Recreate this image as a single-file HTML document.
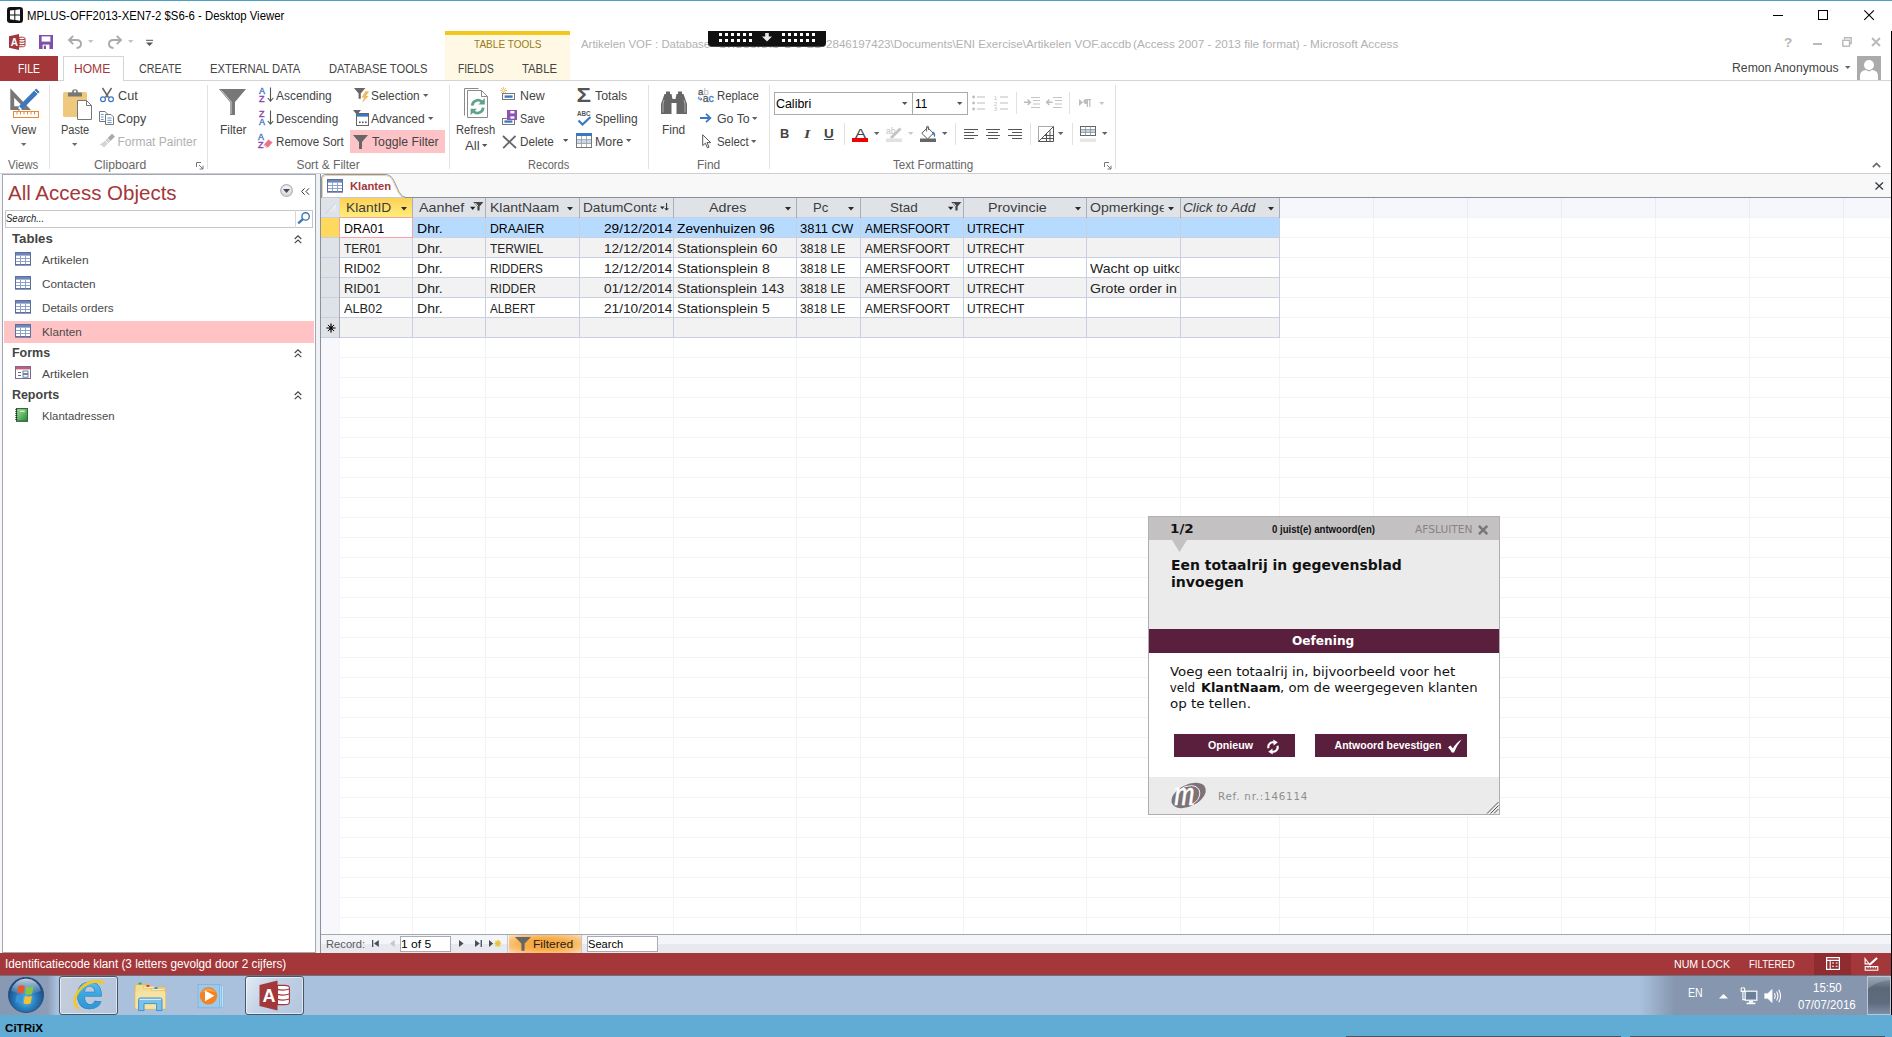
<!DOCTYPE html>
<html lang="nl"><head><meta charset="utf-8"><title>Microsoft Access - Klanten</title>
<style>
html,body{margin:0;padding:0;background:#fff;}
body{width:1892px;height:1037px;overflow:hidden;}
#screen{position:relative;width:1892px;height:1037px;overflow:hidden;background:#fff;font-family:"Liberation Sans",sans-serif;}
.a{position:absolute;box-sizing:border-box;}
.t{position:absolute;white-space:pre;transform-origin:0 50%;display:block;}
svg.a{overflow:visible;}

</style></head>
<body>
<div id="screen">
<div class="a " style="left:0px;top:0px;width:1892px;height:1px;background:#4aa0c8;"></div>
<div class="a " style="left:0px;top:1px;width:1892px;height:30px;background:#ffffff;"></div>
<span class="t" style="left:27.4px;top:8.01px;font-size:12.5px;line-height:16px;color:#000;transform:scaleX(0.9083);">MPLUS-OFF2013-XEN7-2 $S6-6 - Desktop Viewer</span>
<div class="a " style="left:1773px;top:15px;width:10px;height:1px;background:#000;"></div>
<div class="a " style="left:1818px;top:10px;width:10px;height:10px;border:1px solid #000;"></div>
<svg class="a" style="left:1864px;top:10px;" width="10" height="10" viewBox="0 0 10 10"><path d="M0.3 0.3 L9.9 9.9 M9.9 0.3 L0.3 9.9" stroke="#000" stroke-width="1.1" fill="none"/></svg>
<div class="a " style="left:445px;top:31px;width:125px;height:4px;background:#f2c81d;"></div>
<div class="a " style="left:445px;top:35px;width:125px;height:45.5px;background:#fef8e4;"></div>
<span class="t" style="left:473.7px;top:38.00px;font-size:10.6px;line-height:13px;color:#9c7a16;transform:scaleX(0.9482);">TABLE TOOLS</span>
<span class="t" style="left:580.5px;top:37.00px;font-size:11.5px;line-height:14px;color:#b2b2b2;transform:scaleX(0.9904);">Artikelen VOF : Database</span>
<span class="t" style="left:710.4px;top:37.00px;font-size:11.5px;line-height:14px;color:#b2b2b2;transform:scaleX(1.1122);">- C:\Users\S-1-5-21-</span>
<span class="t" style="left:825.6px;top:37.00px;font-size:11.5px;line-height:14px;color:#b2b2b2;transform:scaleX(1.0094);">2846197423\Documents\ENI Exercise\Artikelen VOF.accdb </span>
<span class="t" style="left:1132.9px;top:37.00px;font-size:11.5px;line-height:14px;color:#b2b2b2;transform:scaleX(1.0226);">(Access 2007 - 2013 file format) - Microsoft Access</span>
<div class="a " style="left:0px;top:80px;width:1890.5px;height:1px;background:#d4d4d4;"></div>
<div class="a " style="left:0px;top:56px;width:58px;height:25px;background:#a4373a;"></div>
<span class="t" style="left:17.7px;top:62.01px;font-size:12px;line-height:15px;color:#fff;transform:scaleX(0.8602);">FILE</span>
<div class="a " style="left:62.5px;top:56px;width:61px;height:25px;background:#fff;border:1px solid #d4d4d4;border-bottom:none;"></div>
<span class="t" style="left:74.4px;top:62.01px;font-size:12px;line-height:15px;color:#a4373a;transform:scaleX(1.0056);">HOME</span>
<span class="t" style="left:138.9px;top:62.01px;font-size:12px;line-height:15px;color:#444;transform:scaleX(0.8913);">CREATE</span>
<span class="t" style="left:209.9px;top:62.01px;font-size:12px;line-height:15px;color:#444;transform:scaleX(0.9361);">EXTERNAL DATA</span>
<span class="t" style="left:329.1px;top:62.01px;font-size:12px;line-height:15px;color:#444;transform:scaleX(0.9308);">DATABASE TOOLS</span>
<span class="t" style="left:457.8px;top:62.01px;font-size:12px;line-height:15px;color:#444;transform:scaleX(0.8497);">FIELDS</span>
<span class="t" style="left:521.6px;top:62.01px;font-size:12px;line-height:15px;color:#444;transform:scaleX(0.9428);">TABLE</span>
<span class="t" style="left:1731.9px;top:61.01px;font-size:12px;line-height:15px;color:#444;transform:scaleX(1.0188);">Remon Anonymous</span>
<div class="a " style="left:0px;top:173px;width:1890.5px;height:1px;background:#cfcfcf;"></div>
<div class="a " style="left:49px;top:85px;width:1px;height:84px;background:#e1e1e1;"></div>
<div class="a " style="left:207px;top:85px;width:1px;height:84px;background:#e1e1e1;"></div>
<div class="a " style="left:449px;top:85px;width:1px;height:84px;background:#e1e1e1;"></div>
<div class="a " style="left:648px;top:85px;width:1px;height:84px;background:#e1e1e1;"></div>
<div class="a " style="left:769px;top:85px;width:1px;height:84px;background:#e1e1e1;"></div>
<div class="a " style="left:1115px;top:85px;width:1px;height:84px;background:#e1e1e1;"></div>
<div class="a " style="left:844px;top:123px;width:1px;height:22px;background:#e1e1e1;"></div>
<div class="a " style="left:955px;top:123px;width:1px;height:22px;background:#e1e1e1;"></div>
<div class="a " style="left:1030px;top:123px;width:1px;height:22px;background:#e1e1e1;"></div>
<div class="a " style="left:1072px;top:123px;width:1px;height:22px;background:#e1e1e1;"></div>
<div class="a " style="left:1016px;top:92px;width:1px;height:22px;background:#e1e1e1;"></div>
<div class="a " style="left:1069px;top:92px;width:1px;height:22px;background:#e1e1e1;"></div>
<span class="t" style="left:8.4px;top:158.01px;font-size:12px;line-height:15px;color:#666;transform:scaleX(0.9498);">Views</span>
<span class="t" style="left:94.4px;top:158.01px;font-size:12px;line-height:15px;color:#666;transform:scaleX(1.0161);">Clipboard</span>
<span class="t" style="left:296.4px;top:158.01px;font-size:12px;line-height:15px;color:#666;">Sort &amp; Filter</span>
<span class="t" style="left:527.9px;top:158.01px;font-size:12px;line-height:15px;color:#666;transform:scaleX(0.9220);">Records</span>
<span class="t" style="left:696.9px;top:158.01px;font-size:12px;line-height:15px;color:#666;transform:scaleX(0.9938);">Find</span>
<span class="t" style="left:893.4px;top:158.01px;font-size:12px;line-height:15px;color:#666;transform:scaleX(0.9697);">Text Formatting</span>
<span class="t" style="left:11.0px;top:123.01px;font-size:12px;line-height:15px;color:#444;transform:scaleX(0.9769);">View</span>
<span class="t" style="left:61.4px;top:123.01px;font-size:12px;line-height:15px;color:#444;transform:scaleX(0.9189);">Paste</span>
<span class="t" style="left:118.2px;top:89.02px;font-size:12px;line-height:15px;color:#444;transform:scaleX(1.0542);">Cut</span>
<span class="t" style="left:117.4px;top:112.02px;font-size:12px;line-height:15px;color:#444;transform:scaleX(1.0423);">Copy</span>
<span class="t" style="left:117.4px;top:135.01px;font-size:12px;line-height:15px;color:#b1b1b1;">Format Painter</span>
<span class="t" style="left:219.9px;top:123.01px;font-size:12px;line-height:15px;color:#444;">Filter</span>
<span class="t" style="left:276.4px;top:89.02px;font-size:12px;line-height:15px;color:#444;transform:scaleX(0.9938);">Ascending</span>
<span class="t" style="left:275.9px;top:112.02px;font-size:12px;line-height:15px;color:#444;transform:scaleX(0.9815);">Descending</span>
<span class="t" style="left:275.9px;top:135.01px;font-size:12px;line-height:15px;color:#444;transform:scaleX(0.9667);">Remove Sort</span>
<span class="t" style="left:371.4px;top:89.02px;font-size:12px;line-height:15px;color:#444;transform:scaleX(0.9863);">Selection</span>
<span class="t" style="left:371.4px;top:112.02px;font-size:12px;line-height:15px;color:#444;transform:scaleX(1.0061);">Advanced</span>
<div class="a " style="left:350px;top:130px;width:95px;height:23px;background:#fdc3c6;"></div>
<span class="t" style="left:371.9px;top:135.01px;font-size:12px;line-height:15px;color:#444;transform:scaleX(1.0203);">Toggle Filter</span>
<span class="t" style="left:455.9px;top:123.01px;font-size:12px;line-height:15px;color:#444;transform:scaleX(0.9326);">Refresh</span>
<span class="t" style="left:464.9px;top:139.01px;font-size:12px;line-height:15px;color:#444;transform:scaleX(1.1016);">All</span>
<span class="t" style="left:519.9px;top:89.02px;font-size:12px;line-height:15px;color:#444;transform:scaleX(1.0285);">New</span>
<span class="t" style="left:519.9px;top:112.02px;font-size:12px;line-height:15px;color:#444;transform:scaleX(0.9028);">Save</span>
<span class="t" style="left:519.9px;top:135.01px;font-size:12px;line-height:15px;color:#444;transform:scaleX(0.9715);">Delete</span>
<span class="t" style="left:595.4px;top:89.02px;font-size:12px;line-height:15px;color:#444;transform:scaleX(1.0268);">Totals</span>
<span class="t" style="left:594.9px;top:112.02px;font-size:12px;line-height:15px;color:#444;">Spelling</span>
<span class="t" style="left:595.4px;top:135.01px;font-size:12px;line-height:15px;color:#444;transform:scaleX(1.0313);">More</span>
<span class="t" style="left:661.9px;top:123.01px;font-size:12px;line-height:15px;color:#444;transform:scaleX(0.9938);">Find</span>
<span class="t" style="left:716.9px;top:89.02px;font-size:12px;line-height:15px;color:#444;transform:scaleX(0.9471);">Replace</span>
<span class="t" style="left:716.9px;top:112.02px;font-size:12px;line-height:15px;color:#444;transform:scaleX(1.0279);">Go To</span>
<span class="t" style="left:716.9px;top:135.01px;font-size:12px;line-height:15px;color:#444;transform:scaleX(0.9503);">Select</span>
<div class="a " style="left:774px;top:92px;width:139px;height:23px;background:#fff;border:1px solid #ababab;"></div>
<div class="a " style="left:912px;top:92px;width:56px;height:23px;background:#fff;border:1px solid #ababab;"></div>
<span class="t" style="left:776.4px;top:97.01px;font-size:12px;line-height:15px;color:#000;transform:scaleX(1.0348);">Calibri</span>
<span class="t" style="left:915.4px;top:97.01px;font-size:12px;line-height:15px;color:#000;transform:scaleX(0.9784);">11</span>
<div class="a " style="left:0px;top:174px;width:2px;height:779px;background:#f6f6f6;"></div>
<div class="a " style="left:2px;top:174px;width:1px;height:779px;background:#a0a8b4;"></div>
<div class="a " style="left:2px;top:174px;width:314px;height:1px;background:#a0a8b4;"></div>
<div class="a " style="left:315px;top:174px;width:1px;height:779px;background:#a0a8b4;"></div>
<div class="a " style="left:2px;top:952px;width:319px;height:1px;background:#a0a8b4;"></div>
<div class="a " style="left:316px;top:174px;width:4px;height:779px;background:#f0f1f4;"></div>
<div class="a " style="left:320px;top:174px;width:1px;height:779px;background:#8a919e;"></div>
<span class="t" style="left:8.2px;top:180.02px;font-size:21px;line-height:26px;color:#a4373a;transform:scaleX(0.9761);">All Access Objects</span>
<div class="a " style="left:5px;top:209.5px;width:308px;height:18.5px;background:#fff;border:1px solid #c6c6c6;"></div>
<div class="a " style="left:294.5px;top:210px;width:1px;height:17.5px;background:#d8d8d8;"></div>
<span class="t" style="left:6.4px;top:211.00px;font-size:11.5px;line-height:14px;color:#222;font-style:italic;transform:scaleX(0.8288);">Search...</span>
<span class="t" style="left:11.9px;top:231.01px;font-size:12.5px;line-height:16px;color:#444;font-weight:bold;transform:scaleX(1.0537);">Tables</span>
<svg class="a" style="left:294.3px;top:234.5px;" width="8" height="9" viewBox="0 0 8 9"><path d="M0.7 4 L4 0.9 L7.3 4 M0.7 8.2 L4 5.1 L7.3 8.2" stroke="#444" stroke-width="1.15" fill="none"/></svg>
<span class="t" style="left:42.4px;top:253.00px;font-size:11.5px;line-height:14px;color:#4a4a4a;transform:scaleX(1.0425);">Artikelen</span>
<svg class="a" style="left:15px;top:252.0px" width="16" height="14" viewBox="0 0 16 14"><rect x="0.5" y="0.5" width="15" height="12" fill="#fff" stroke="#5a6f9c"/>
<rect x="1" y="1" width="14" height="2.6" fill="#6f86b8"/>
<path d="M1 6.5H15M1 9.5H15M5.5 3.5V12.5M10.5 3.5V12.5" stroke="#8da2cc" stroke-width="1" fill="none"/>
<rect x="0" y="13" width="16" height="1" fill="#3b4b6e" opacity=".55"/></svg>
<span class="t" style="left:42.4px;top:277.00px;font-size:11.5px;line-height:14px;color:#4a4a4a;transform:scaleX(1.0231);">Contacten</span>
<svg class="a" style="left:15px;top:276.0px" width="16" height="14" viewBox="0 0 16 14"><rect x="0.5" y="0.5" width="15" height="12" fill="#fff" stroke="#5a6f9c"/>
<rect x="1" y="1" width="14" height="2.6" fill="#6f86b8"/>
<path d="M1 6.5H15M1 9.5H15M5.5 3.5V12.5M10.5 3.5V12.5" stroke="#8da2cc" stroke-width="1" fill="none"/>
<rect x="0" y="13" width="16" height="1" fill="#3b4b6e" opacity=".55"/></svg>
<span class="t" style="left:42.4px;top:301.00px;font-size:11.5px;line-height:14px;color:#4a4a4a;transform:scaleX(1.0098);">Details orders</span>
<svg class="a" style="left:15px;top:300.0px" width="16" height="14" viewBox="0 0 16 14"><rect x="0.5" y="0.5" width="15" height="12" fill="#fff" stroke="#5a6f9c"/>
<rect x="1" y="1" width="14" height="2.6" fill="#6f86b8"/>
<path d="M1 6.5H15M1 9.5H15M5.5 3.5V12.5M10.5 3.5V12.5" stroke="#8da2cc" stroke-width="1" fill="none"/>
<rect x="0" y="13" width="16" height="1" fill="#3b4b6e" opacity=".55"/></svg>
<div class="a " style="left:4px;top:321.0px;width:310px;height:21.5px;background:#ffc3c5;"></div>
<span class="t" style="left:42.4px;top:325.00px;font-size:11.5px;line-height:14px;color:#4a4a4a;transform:scaleX(1.0163);">Klanten</span>
<svg class="a" style="left:15px;top:324.0px" width="16" height="14" viewBox="0 0 16 14"><rect x="0.5" y="0.5" width="15" height="12" fill="#fff" stroke="#5a6f9c"/>
<rect x="1" y="1" width="14" height="2.6" fill="#6f86b8"/>
<path d="M1 6.5H15M1 9.5H15M5.5 3.5V12.5M10.5 3.5V12.5" stroke="#8da2cc" stroke-width="1" fill="none"/>
<rect x="0" y="13" width="16" height="1" fill="#3b4b6e" opacity=".55"/></svg>
<span class="t" style="left:11.9px;top:345.01px;font-size:12.5px;line-height:16px;color:#444;font-weight:bold;">Forms</span>
<svg class="a" style="left:294.3px;top:348.5px;" width="8" height="9" viewBox="0 0 8 9"><path d="M0.7 4 L4 0.9 L7.3 4 M0.7 8.2 L4 5.1 L7.3 8.2" stroke="#444" stroke-width="1.15" fill="none"/></svg>
<span class="t" style="left:42.4px;top:367.00px;font-size:11.5px;line-height:14px;color:#4a4a4a;transform:scaleX(1.0425);">Artikelen</span>
<svg class="a" style="left:15px;top:366.0px" width="16" height="14" viewBox="0 0 16 14"><rect x="0.5" y="0.5" width="15" height="12" fill="#fff" stroke="#7b6a8c"/>
<rect x="1" y="1" width="14" height="2.4" fill="#c85a7c"/>
<path d="M3 6.5H6M3 9.5H6" stroke="#5a6f9c" stroke-width="1.2"/><rect x="8" y="5" width="5" height="2.6" fill="none" stroke="#5a6f9c" stroke-width=".9"/><rect x="8" y="8.6" width="5" height="2.6" fill="none" stroke="#5a6f9c" stroke-width=".9"/></svg>
<span class="t" style="left:11.9px;top:387.01px;font-size:12.5px;line-height:16px;color:#444;font-weight:bold;">Reports</span>
<svg class="a" style="left:294.3px;top:390.5px;" width="8" height="9" viewBox="0 0 8 9"><path d="M0.7 4 L4 0.9 L7.3 4 M0.7 8.2 L4 5.1 L7.3 8.2" stroke="#444" stroke-width="1.15" fill="none"/></svg>
<span class="t" style="left:42.4px;top:409.00px;font-size:11.5px;line-height:14px;color:#4a4a4a;transform:scaleX(0.9880);">Klantadressen</span>
<svg class="a" style="left:15px;top:408.0px" width="14" height="14" viewBox="0 0 14 14"><defs><linearGradient id="rpg" x1="0" y1="0" x2="1" y2="1"><stop offset="0" stop-color="#a6dca0"/><stop offset=".55" stop-color="#5db562"/><stop offset="1" stop-color="#2f7f3b"/></linearGradient></defs>
<rect x="1.5" y="0.5" width="11" height="12.5" fill="url(#rpg)" stroke="#2c6b37"/>
<rect x="4.4" y="2.2" width="5.6" height="2" fill="#d6f0d2" stroke="#6fae72" stroke-width=".5"/>
<path d="M0.3 1.5H2.3M0.3 3.5H2.3M0.3 5.5H2.3M0.3 7.5H2.3M0.3 9.5H2.3M0.3 11.5H2.3" stroke="#222" stroke-width=".9"/>
<rect x="1" y="13" width="12" height="1" fill="#1d3f22" opacity=".6"/></svg>
<div class="a " style="left:321px;top:174px;width:1569.5px;height:23px;background:#f8f8f8;"></div>
<div class="a " style="left:321px;top:197px;width:1569.5px;height:1px;background:#8b9097;"></div>
<div class="a " style="left:321px;top:198px;width:1569.5px;height:20px;background:#f6f7fd;"></div>
<div class="a " style="left:321px;top:217px;width:1569.5px;height:1px;background:#f3f4f8;"></div>
<div class="a " style="left:321px;top:237px;width:1569.5px;height:1px;background:#f3f4f8;"></div>
<div class="a " style="left:321px;top:257px;width:1569.5px;height:1px;background:#f3f4f8;"></div>
<div class="a " style="left:321px;top:277px;width:1569.5px;height:1px;background:#f3f4f8;"></div>
<div class="a " style="left:321px;top:297px;width:1569.5px;height:1px;background:#f3f4f8;"></div>
<div class="a " style="left:321px;top:317px;width:1569.5px;height:1px;background:#f3f4f8;"></div>
<div class="a " style="left:321px;top:337px;width:1569.5px;height:1px;background:#f3f4f8;"></div>
<div class="a " style="left:321px;top:357px;width:1569.5px;height:1px;background:#f3f4f8;"></div>
<div class="a " style="left:321px;top:377px;width:1569.5px;height:1px;background:#f3f4f8;"></div>
<div class="a " style="left:321px;top:397px;width:1569.5px;height:1px;background:#f3f4f8;"></div>
<div class="a " style="left:321px;top:417px;width:1569.5px;height:1px;background:#f3f4f8;"></div>
<div class="a " style="left:321px;top:437px;width:1569.5px;height:1px;background:#f3f4f8;"></div>
<div class="a " style="left:321px;top:457px;width:1569.5px;height:1px;background:#f3f4f8;"></div>
<div class="a " style="left:321px;top:477px;width:1569.5px;height:1px;background:#f3f4f8;"></div>
<div class="a " style="left:321px;top:497px;width:1569.5px;height:1px;background:#f3f4f8;"></div>
<div class="a " style="left:321px;top:517px;width:1569.5px;height:1px;background:#f3f4f8;"></div>
<div class="a " style="left:321px;top:537px;width:1569.5px;height:1px;background:#f3f4f8;"></div>
<div class="a " style="left:321px;top:557px;width:1569.5px;height:1px;background:#f3f4f8;"></div>
<div class="a " style="left:321px;top:577px;width:1569.5px;height:1px;background:#f3f4f8;"></div>
<div class="a " style="left:321px;top:597px;width:1569.5px;height:1px;background:#f3f4f8;"></div>
<div class="a " style="left:321px;top:617px;width:1569.5px;height:1px;background:#f3f4f8;"></div>
<div class="a " style="left:321px;top:637px;width:1569.5px;height:1px;background:#f3f4f8;"></div>
<div class="a " style="left:321px;top:657px;width:1569.5px;height:1px;background:#f3f4f8;"></div>
<div class="a " style="left:321px;top:677px;width:1569.5px;height:1px;background:#f3f4f8;"></div>
<div class="a " style="left:321px;top:697px;width:1569.5px;height:1px;background:#f3f4f8;"></div>
<div class="a " style="left:321px;top:717px;width:1569.5px;height:1px;background:#f3f4f8;"></div>
<div class="a " style="left:321px;top:737px;width:1569.5px;height:1px;background:#f3f4f8;"></div>
<div class="a " style="left:321px;top:757px;width:1569.5px;height:1px;background:#f3f4f8;"></div>
<div class="a " style="left:321px;top:777px;width:1569.5px;height:1px;background:#f3f4f8;"></div>
<div class="a " style="left:321px;top:797px;width:1569.5px;height:1px;background:#f3f4f8;"></div>
<div class="a " style="left:321px;top:817px;width:1569.5px;height:1px;background:#f3f4f8;"></div>
<div class="a " style="left:321px;top:837px;width:1569.5px;height:1px;background:#f3f4f8;"></div>
<div class="a " style="left:321px;top:857px;width:1569.5px;height:1px;background:#f3f4f8;"></div>
<div class="a " style="left:321px;top:877px;width:1569.5px;height:1px;background:#f3f4f8;"></div>
<div class="a " style="left:321px;top:897px;width:1569.5px;height:1px;background:#f3f4f8;"></div>
<div class="a " style="left:321px;top:917px;width:1569.5px;height:1px;background:#f3f4f8;"></div>
<div class="a " style="left:339px;top:198px;width:1px;height:736px;background:#f3f4f8;"></div>
<div class="a " style="left:412px;top:198px;width:1px;height:736px;background:#f3f4f8;"></div>
<div class="a " style="left:485px;top:198px;width:1px;height:736px;background:#f3f4f8;"></div>
<div class="a " style="left:579px;top:198px;width:1px;height:736px;background:#f3f4f8;"></div>
<div class="a " style="left:673px;top:198px;width:1px;height:736px;background:#f3f4f8;"></div>
<div class="a " style="left:796px;top:198px;width:1px;height:736px;background:#f3f4f8;"></div>
<div class="a " style="left:860px;top:198px;width:1px;height:736px;background:#f3f4f8;"></div>
<div class="a " style="left:963px;top:198px;width:1px;height:736px;background:#f3f4f8;"></div>
<div class="a " style="left:1086px;top:198px;width:1px;height:736px;background:#f3f4f8;"></div>
<div class="a " style="left:1180px;top:198px;width:1px;height:736px;background:#f3f4f8;"></div>
<div class="a " style="left:1279px;top:198px;width:1px;height:736px;background:#f3f4f8;"></div>
<div class="a " style="left:1373px;top:198px;width:1px;height:736px;background:#f3f4f8;"></div>
<div class="a " style="left:1467px;top:198px;width:1px;height:736px;background:#f3f4f8;"></div>
<div class="a " style="left:1561px;top:198px;width:1px;height:736px;background:#f3f4f8;"></div>
<div class="a " style="left:1655px;top:198px;width:1px;height:736px;background:#f3f4f8;"></div>
<div class="a " style="left:1749px;top:198px;width:1px;height:736px;background:#f3f4f8;"></div>
<div class="a " style="left:1843px;top:198px;width:1px;height:736px;background:#f3f4f8;"></div>
<div class="a " style="left:1373px;top:198px;width:1px;height:19px;background:#e9ebf2;"></div>
<div class="a " style="left:1467px;top:198px;width:1px;height:19px;background:#e9ebf2;"></div>
<div class="a " style="left:1561px;top:198px;width:1px;height:19px;background:#e9ebf2;"></div>
<div class="a " style="left:1655px;top:198px;width:1px;height:19px;background:#e9ebf2;"></div>
<div class="a " style="left:1749px;top:198px;width:1px;height:19px;background:#e9ebf2;"></div>
<div class="a " style="left:1843px;top:198px;width:1px;height:19px;background:#e9ebf2;"></div>
<div class="a " style="left:321px;top:338px;width:18px;height:596px;background:#f7f7fc;"></div>
<svg class="a" style="left:321px;top:173px;" width="90" height="25" viewBox="0 0 90 25"><path d="M0.5 25 L0.5 6 Q0.5 1.5 5 1.5 L64 1.5 Q69.5 1.5 72.5 7 L78 19 Q81 24.5 85 24.5 L85 25 Z" fill="#fff" stroke="#8f96a0" stroke-width="1"/><path d="M1.5 25 L1.5 6.4 Q1.5 2.5 5.2 2.5 L63.8 2.5 Q68.8 2.5 71.6 7.6 L77 19.4 Q79.4 23.6 82 24.4" fill="none" stroke="#ecd2a6" stroke-width="1"/></svg>
<span class="t" style="left:350.4px;top:179.00px;font-size:11.5px;line-height:14px;color:#a4373a;font-weight:bold;transform:scaleX(0.9758);">Klanten</span>
<svg class="a" style="left:327px;top:178.6px" width="16" height="14" viewBox="0 0 16 14"><rect x="0.5" y="0.5" width="15" height="12" fill="#fff" stroke="#5a6f9c"/>
<rect x="1" y="1" width="14" height="2.6" fill="#6f86b8"/>
<path d="M1 6.5H15M1 9.5H15M5.5 3.5V12.5M10.5 3.5V12.5" stroke="#8da2cc" stroke-width="1" fill="none"/>
<rect x="0" y="13" width="16" height="1" fill="#3b4b6e" opacity=".55"/></svg>
<svg class="a" style="left:1875px;top:182px;" width="9" height="8" viewBox="0 0 9 8"><path d="M0.5 0.5 L8 7.5 M8 0.5 L0.5 7.5" stroke="#333a44" stroke-width="1.3" fill="none"/></svg>
<div class="a " style="left:321px;top:198px;width:959px;height:19px;background:#dfe3e8;"></div>
<div class="a " style="left:340px;top:198px;width:72px;height:19px;background:linear-gradient(#fdd157,#ffe06a 55%,#ffee7a);"></div>
<div class="a " style="left:340px;top:218px;width:939.5px;height:20px;background:#b7dbff;"></div>
<div class="a " style="left:321px;top:218px;width:19px;height:20px;background:#ffd95e;"></div>
<div class="a " style="left:340px;top:238px;width:939.5px;height:20px;background:#f2f2f2;"></div>
<div class="a " style="left:321px;top:238px;width:19px;height:20px;background:#dfe2e7;"></div>
<div class="a " style="left:340px;top:258px;width:939.5px;height:20px;background:#ffffff;"></div>
<div class="a " style="left:321px;top:258px;width:19px;height:20px;background:#dfe2e7;"></div>
<div class="a " style="left:340px;top:278px;width:939.5px;height:20px;background:#f2f2f2;"></div>
<div class="a " style="left:321px;top:278px;width:19px;height:20px;background:#dfe2e7;"></div>
<div class="a " style="left:340px;top:298px;width:939.5px;height:20px;background:#ffffff;"></div>
<div class="a " style="left:321px;top:298px;width:19px;height:20px;background:#dfe2e7;"></div>
<div class="a " style="left:340px;top:318px;width:939.5px;height:20px;background:#f2f2f2;"></div>
<div class="a " style="left:321px;top:318px;width:19px;height:20px;background:#dfe2e7;"></div>
<div class="a " style="left:321px;top:217px;width:959px;height:1px;background:#c8d0df;"></div>
<div class="a " style="left:321px;top:237px;width:959px;height:1px;background:#c8d0df;"></div>
<div class="a " style="left:321px;top:257px;width:959px;height:1px;background:#c8d0df;"></div>
<div class="a " style="left:321px;top:277px;width:959px;height:1px;background:#c8d0df;"></div>
<div class="a " style="left:321px;top:297px;width:959px;height:1px;background:#c8d0df;"></div>
<div class="a " style="left:321px;top:317px;width:959px;height:1px;background:#c8d0df;"></div>
<div class="a " style="left:321px;top:337px;width:959px;height:1px;background:#c8d0df;"></div>
<div class="a " style="left:339px;top:218px;width:1px;height:120px;background:#a9adb7;"></div>
<div class="a " style="left:339px;top:198px;width:1px;height:20px;background:#d5d9e0;"></div>
<div class="a " style="left:412px;top:218px;width:1px;height:120px;background:#c8d0df;"></div>
<div class="a " style="left:412px;top:198px;width:1px;height:20px;background:#aab0ba;"></div>
<div class="a " style="left:485px;top:218px;width:1px;height:120px;background:#c8d0df;"></div>
<div class="a " style="left:485px;top:198px;width:1px;height:20px;background:#aab0ba;"></div>
<div class="a " style="left:579px;top:218px;width:1px;height:120px;background:#c8d0df;"></div>
<div class="a " style="left:579px;top:198px;width:1px;height:20px;background:#aab0ba;"></div>
<div class="a " style="left:673px;top:218px;width:1px;height:120px;background:#c8d0df;"></div>
<div class="a " style="left:673px;top:198px;width:1px;height:20px;background:#aab0ba;"></div>
<div class="a " style="left:796px;top:218px;width:1px;height:120px;background:#c8d0df;"></div>
<div class="a " style="left:796px;top:198px;width:1px;height:20px;background:#aab0ba;"></div>
<div class="a " style="left:860px;top:218px;width:1px;height:120px;background:#c8d0df;"></div>
<div class="a " style="left:860px;top:198px;width:1px;height:20px;background:#aab0ba;"></div>
<div class="a " style="left:963px;top:218px;width:1px;height:120px;background:#c8d0df;"></div>
<div class="a " style="left:963px;top:198px;width:1px;height:20px;background:#aab0ba;"></div>
<div class="a " style="left:1086px;top:218px;width:1px;height:120px;background:#c8d0df;"></div>
<div class="a " style="left:1086px;top:198px;width:1px;height:20px;background:#aab0ba;"></div>
<div class="a " style="left:1180px;top:218px;width:1px;height:120px;background:#c8d0df;"></div>
<div class="a " style="left:1180px;top:198px;width:1px;height:20px;background:#aab0ba;"></div>
<div class="a " style="left:1279px;top:218px;width:1px;height:120px;background:#c8d0df;"></div>
<div class="a " style="left:1279px;top:198px;width:1px;height:20px;background:#aab0ba;"></div>
<div class="a " style="left:339px;top:217px;width:74px;height:21px;background:#fff;border:1.5px solid #f6a3a8;"></div>
<span class="t" style="left:345.9px;top:200.01px;font-size:12.7px;line-height:16px;color:#3c3c3c;transform:scaleX(1.0880);">KlantID</span>
<span class="t" style="left:418.9px;top:200.01px;font-size:12.7px;line-height:16px;color:#3c3c3c;transform:scaleX(1.1256);">Aanhef</span>
<span class="t" style="left:490.4px;top:200.01px;font-size:12.7px;line-height:16px;color:#3c3c3c;transform:scaleX(1.1036);">KlantNaam</span>
<span class="t" style="left:583.4px;top:200.01px;font-size:12.7px;line-height:16px;color:#3c3c3c;transform:scaleX(1.0777);clip-path:inset(0 4.5% 0 0);">DatumConta</span>
<span class="t" style="left:709.4px;top:200.01px;font-size:12.7px;line-height:16px;color:#3c3c3c;transform:scaleX(1.1241);">Adres</span>
<span class="t" style="left:812.9px;top:200.01px;font-size:12.7px;line-height:16px;color:#3c3c3c;transform:scaleX(1.0309);">Pc</span>
<span class="t" style="left:890.4px;top:200.01px;font-size:12.7px;line-height:16px;color:#3c3c3c;transform:scaleX(1.0636);">Stad</span>
<span class="t" style="left:988.4px;top:200.01px;font-size:12.7px;line-height:16px;color:#3c3c3c;transform:scaleX(1.1261);">Provincie</span>
<span class="t" style="left:1089.9px;top:200.01px;font-size:12.7px;line-height:16px;color:#3c3c3c;transform:scaleX(1.1108);clip-path:inset(0 4% 0 0);">Opmerkinge</span>
<span class="t" style="left:1183.4px;top:200.01px;font-size:12.7px;line-height:16px;color:#3c3c3c;font-style:italic;transform:scaleX(1.0749);">Click to Add</span>
<svg class="a" style="left:400.5px;top:206.6px;" width="6" height="4" viewBox="0 0 6 4"><path d="M0 0H6L3 3.5Z" fill="#2a2a2a"/></svg>
<svg class="a" style="left:567px;top:206.6px;" width="6" height="4" viewBox="0 0 6 4"><path d="M0 0H6L3 3.5Z" fill="#2a2a2a"/></svg>
<svg class="a" style="left:784.5px;top:206.6px;" width="6" height="4" viewBox="0 0 6 4"><path d="M0 0H6L3 3.5Z" fill="#2a2a2a"/></svg>
<svg class="a" style="left:848px;top:206.6px;" width="6" height="4" viewBox="0 0 6 4"><path d="M0 0H6L3 3.5Z" fill="#2a2a2a"/></svg>
<svg class="a" style="left:1074.5px;top:206.6px;" width="6" height="4" viewBox="0 0 6 4"><path d="M0 0H6L3 3.5Z" fill="#2a2a2a"/></svg>
<svg class="a" style="left:1168px;top:206.6px;" width="6" height="4" viewBox="0 0 6 4"><path d="M0 0H6L3 3.5Z" fill="#2a2a2a"/></svg>
<svg class="a" style="left:1267.5px;top:206.6px;" width="6" height="4" viewBox="0 0 6 4"><path d="M0 0H6L3 3.5Z" fill="#2a2a2a"/></svg>
<span class="t" style="left:343.7px;top:221.00px;font-size:12.7px;line-height:16px;color:#000;transform:scaleX(0.9844);">DRA01</span>
<span class="t" style="left:416.7px;top:221.00px;font-size:12.7px;line-height:16px;color:#000;transform:scaleX(1.1069);">Dhr.</span>
<span class="t" style="left:489.7px;top:221.00px;font-size:12.7px;line-height:16px;color:#000;transform:scaleX(0.9621);">DRAAIER</span>
<span class="t" style="left:604.4px;top:221.00px;font-size:12.7px;line-height:16px;color:#000;transform:scaleX(1.0751);">29/12/2014</span>
<span class="t" style="left:677.4px;top:221.00px;font-size:12.7px;line-height:16px;color:#000;transform:scaleX(1.0828);">Zevenhuizen 96</span>
<span class="t" style="left:800.4px;top:221.00px;font-size:12.7px;line-height:16px;color:#000;transform:scaleX(1.0253);">3811 CW</span>
<span class="t" style="left:864.7px;top:221.00px;font-size:12.7px;line-height:16px;color:#000;transform:scaleX(0.9493);">AMERSFOORT</span>
<span class="t" style="left:967.2px;top:221.00px;font-size:12.7px;line-height:16px;color:#000;transform:scaleX(0.9447);">UTRECHT</span>
<span class="t" style="left:343.7px;top:241.00px;font-size:12.7px;line-height:16px;color:#222;transform:scaleX(0.9435);">TER01</span>
<span class="t" style="left:416.7px;top:241.00px;font-size:12.7px;line-height:16px;color:#222;transform:scaleX(1.1069);">Dhr.</span>
<span class="t" style="left:489.7px;top:241.00px;font-size:12.7px;line-height:16px;color:#222;transform:scaleX(0.9483);">TERWIEL</span>
<span class="t" style="left:604.4px;top:241.00px;font-size:12.7px;line-height:16px;color:#222;transform:scaleX(1.0751);">12/12/2014</span>
<span class="t" style="left:677.4px;top:241.00px;font-size:12.7px;line-height:16px;color:#222;transform:scaleX(1.1104);">Stationsplein 60</span>
<span class="t" style="left:800.4px;top:241.00px;font-size:12.7px;line-height:16px;color:#222;transform:scaleX(0.9575);">3818 LE</span>
<span class="t" style="left:864.7px;top:241.00px;font-size:12.7px;line-height:16px;color:#222;transform:scaleX(0.9493);">AMERSFOORT</span>
<span class="t" style="left:967.2px;top:241.00px;font-size:12.7px;line-height:16px;color:#222;transform:scaleX(0.9447);">UTRECHT</span>
<span class="t" style="left:343.7px;top:261.00px;font-size:12.7px;line-height:16px;color:#222;transform:scaleX(1.0084);">RID02</span>
<span class="t" style="left:416.7px;top:261.00px;font-size:12.7px;line-height:16px;color:#222;transform:scaleX(1.1069);">Dhr.</span>
<span class="t" style="left:489.7px;top:261.00px;font-size:12.7px;line-height:16px;color:#222;transform:scaleX(0.9240);">RIDDERS</span>
<span class="t" style="left:604.4px;top:261.00px;font-size:12.7px;line-height:16px;color:#222;transform:scaleX(1.0751);">12/12/2014</span>
<span class="t" style="left:677.4px;top:261.00px;font-size:12.7px;line-height:16px;color:#222;transform:scaleX(1.1146);">Stationsplein 8</span>
<span class="t" style="left:800.4px;top:261.00px;font-size:12.7px;line-height:16px;color:#222;transform:scaleX(0.9575);">3818 LE</span>
<span class="t" style="left:864.7px;top:261.00px;font-size:12.7px;line-height:16px;color:#222;transform:scaleX(0.9493);">AMERSFOORT</span>
<span class="t" style="left:967.2px;top:261.00px;font-size:12.7px;line-height:16px;color:#222;transform:scaleX(0.9447);">UTRECHT</span>
<span class="t" style="left:1090.2px;top:261.00px;font-size:12.7px;line-height:16px;color:#222;transform:scaleX(1.1057);clip-path:inset(0 3.2% 0 0);">Wacht op uitko</span>
<span class="t" style="left:343.7px;top:281.00px;font-size:12.7px;line-height:16px;color:#222;transform:scaleX(1.0084);">RID01</span>
<span class="t" style="left:416.7px;top:281.00px;font-size:12.7px;line-height:16px;color:#222;transform:scaleX(1.1069);">Dhr.</span>
<span class="t" style="left:489.7px;top:281.00px;font-size:12.7px;line-height:16px;color:#222;transform:scaleX(0.9410);">RIDDER</span>
<span class="t" style="left:604.4px;top:281.00px;font-size:12.7px;line-height:16px;color:#222;transform:scaleX(1.0751);">01/12/2014</span>
<span class="t" style="left:677.4px;top:281.00px;font-size:12.7px;line-height:16px;color:#222;transform:scaleX(1.1020);">Stationsplein 143</span>
<span class="t" style="left:800.4px;top:281.00px;font-size:12.7px;line-height:16px;color:#222;transform:scaleX(0.9575);">3818 LE</span>
<span class="t" style="left:864.7px;top:281.00px;font-size:12.7px;line-height:16px;color:#222;transform:scaleX(0.9493);">AMERSFOORT</span>
<span class="t" style="left:967.2px;top:281.00px;font-size:12.7px;line-height:16px;color:#222;transform:scaleX(0.9447);">UTRECHT</span>
<span class="t" style="left:1090.2px;top:281.00px;font-size:12.7px;line-height:16px;color:#222;transform:scaleX(1.1084);">Grote order in</span>
<span class="t" style="left:343.7px;top:301.00px;font-size:12.7px;line-height:16px;color:#222;transform:scaleX(1.0046);">ALB02</span>
<span class="t" style="left:416.7px;top:301.00px;font-size:12.7px;line-height:16px;color:#222;transform:scaleX(1.1069);">Dhr.</span>
<span class="t" style="left:489.7px;top:301.00px;font-size:12.7px;line-height:16px;color:#222;transform:scaleX(0.9212);">ALBERT</span>
<span class="t" style="left:604.4px;top:301.00px;font-size:12.7px;line-height:16px;color:#222;transform:scaleX(1.0751);">21/10/2014</span>
<span class="t" style="left:677.4px;top:301.00px;font-size:12.7px;line-height:16px;color:#222;transform:scaleX(1.1146);">Stationsplein 5</span>
<span class="t" style="left:800.4px;top:301.00px;font-size:12.7px;line-height:16px;color:#222;transform:scaleX(0.9575);">3818 LE</span>
<span class="t" style="left:864.7px;top:301.00px;font-size:12.7px;line-height:16px;color:#222;transform:scaleX(0.9493);">AMERSFOORT</span>
<span class="t" style="left:967.2px;top:301.00px;font-size:12.7px;line-height:16px;color:#222;transform:scaleX(0.9447);">UTRECHT</span>
<svg class="a" style="left:325.5px;top:322.5px;" width="10" height="10" viewBox="0 0 10 10"><path d="M5 0.4V9.6M0.4 5H9.6" stroke="#000" stroke-width="1.2" fill="none"/><path d="M1.9 1.9L8.1 8.1M8.1 1.9L1.9 8.1" stroke="#000" stroke-width="1" fill="none"/><circle cx="5" cy="5" r="1.5"/></svg>
<div class="a " style="left:321px;top:934px;width:1569.5px;height:1px;background:#a5a8ad;"></div>
<div class="a " style="left:321px;top:935px;width:1569.5px;height:9px;background:#f4f5f8;"></div>
<div class="a " style="left:321px;top:944px;width:1569.5px;height:9px;background:#e8e9ee;"></div>
<span class="t" style="left:325.8px;top:937.01px;font-size:11.5px;line-height:14px;color:#5a5a5a;transform:scaleX(0.9719);">Record:</span>
<div class="a " style="left:400px;top:936px;width:50.5px;height:15.5px;background:#fff;border:1px solid #a8abb3;"></div>
<span class="t" style="left:401.4px;top:937.01px;font-size:11.5px;line-height:14px;color:#000;transform:scaleX(1.0476);">1 of 5</span>
<div class="a " style="left:507px;top:935px;width:1px;height:18px;background:#c5c7cf;"></div>
<div class="a " style="left:509px;top:935px;width:71.5px;height:18px;background:radial-gradient(ellipse at 50% 50%,#f8a53a 0,#f9ad48 45%,#fbc988 80%,#fde3bd 100%);"></div>
<span class="t" style="left:533.4px;top:937.01px;font-size:11.5px;line-height:14px;color:#222;transform:scaleX(1.0467);">Filtered</span>
<div class="a " style="left:581px;top:935px;width:1px;height:18px;background:#c5c7cf;"></div>
<div class="a " style="left:587px;top:936px;width:70.5px;height:15.5px;background:#fff;border:1px solid #a8abb3;"></div>
<span class="t" style="left:588.4px;top:937.01px;font-size:11.5px;line-height:14px;color:#000;transform:scaleX(0.9647);">Search</span>
<div class="a " style="left:0px;top:953px;width:1892px;height:22px;background:#a4373a;"></div>
<span class="t" style="left:5.4px;top:957.01px;font-size:12px;line-height:15px;color:#fff;transform:scaleX(0.9804);">Identificatiecode klant (3 letters gevolgd door 2 cijfers)</span>
<span class="t" style="left:1674.4px;top:957.00px;font-size:11.5px;line-height:14px;color:#fff;transform:scaleX(0.9250);">NUM LOCK</span>
<span class="t" style="left:1749.4px;top:957.00px;font-size:11.5px;line-height:14px;color:#fff;transform:scaleX(0.8338);">FILTERED</span>
<div class="a " style="left:1814px;top:953px;width:37px;height:22px;background:#8e2c30;"></div>
<div class="a " style="left:0px;top:975px;width:1892px;height:40px;background:#a9c1dd;border-top:1px solid #6b6f80;"></div>
<div class="a " style="left:0px;top:976px;width:57px;height:39px;background:linear-gradient(90deg,#8798b2,#8d9eb8 84%,#a9c1dd);"></div>
<div class="a " style="left:1640px;top:976px;width:227px;height:39px;background:linear-gradient(90deg,rgba(134,150,174,0),#8696ae 35px,#8696ae);"></div>
<div class="a " style="left:1867px;top:976px;width:23.5px;height:38.5px;background:linear-gradient(180deg,#8593a6 0,#5a6878 30%,#5e6c7e 70%,#7e8fa6 100%);border:1px solid #bcc6d4;"></div>
<svg class="a" style="left:1868px;top:977px;" width="22" height="14" viewBox="0 0 22 14"><path d="M0 0H22V3Q8 4 0 12Z" fill="#fff" opacity=".18"/></svg>
<div class="a " style="left:58.5px;top:975.5px;width:59px;height:39.2px;border:1px solid #4a5566;border-radius:3px;background:linear-gradient(100deg,#c6cddb,#bcc8dc 50%,#b5c5dc);box-shadow:inset 0 0 0 1px rgba(255,255,255,.55);"></div>
<div class="a " style="left:244.5px;top:975.5px;width:59px;height:39.2px;border:1px solid #4a5566;border-radius:3px;background:linear-gradient(125deg,#e4ecf6,#c3d2e6 40%,#b3c6df);box-shadow:inset 0 0 0 1px rgba(255,255,255,.55);"></div>
<span class="t" style="left:1688.4px;top:986.01px;font-size:12px;line-height:15px;color:#fff;transform:scaleX(0.8817);">EN</span>
<span class="t" style="left:1813.4px;top:981.01px;font-size:12px;line-height:15px;color:#fff;transform:scaleX(0.9557);">15:50</span>
<span class="t" style="left:1798.4px;top:998.01px;font-size:12px;line-height:15px;color:#fff;transform:scaleX(0.9607);">07/07/2016</span>
<div class="a " style="left:0px;top:1015px;width:1892px;height:22px;background:#61acd4;"></div>
<div class="a " style="left:1346px;top:1036px;width:275px;height:1px;background:#4a5560;"></div>
<div class="a " style="left:1630px;top:1036px;width:255px;height:1px;background:#4a5560;"></div>
<span class="t" style="left:4.9px;top:1022.00px;font-size:10.5px;line-height:13px;color:#000;font-weight:bold;transform:scaleX(1.1054);">CiTRiX</span>
<div class="a " style="left:1148px;top:516px;width:352px;height:299px;background:#fff;border:1px solid #b0aeaf;"></div>
<div class="a " style="left:1149px;top:517px;width:350px;height:23px;background:#c3c1c2;"></div>
<div class="a " style="left:1149px;top:540px;width:350px;height:88.5px;background:#ebebeb;"></div>
<svg class="a" style="left:1172px;top:540px;" width="15" height="12" viewBox="0 0 15 12"><path d="M0 0H15L7.5 12Z" fill="#c3c1c2"/></svg>
<div class="a " style="left:1149px;top:628.5px;width:350px;height:24px;background:#5a1f3d;"></div>
<div class="a " style="left:1149px;top:777px;width:350px;height:37px;background:#ebebeb;"></div>
<span class="t" style="left:1170.4px;top:522.01px;font-size:12px;line-height:15px;color:#111;font-family:'DejaVu Sans',sans-serif;font-weight:bold;transform:scaleX(1.1236);">1/2</span>
<span class="t" style="left:1272.4px;top:523.01px;font-size:10.5px;line-height:13px;color:#111;font-weight:bold;transform:scaleX(0.9152);">0 juist(e) antwoord(en)</span>
<span class="t" style="left:1415.4px;top:524.01px;font-size:10px;line-height:12px;color:#8a8286;font-family:'DejaVu Sans',sans-serif;transform:scaleX(1.0645);">AFSLUITEN</span>
<svg class="a" style="left:1478px;top:525px;" width="10" height="10" viewBox="0 0 10 10"><path d="M0.9 0.9L9.3 9.1M9.3 0.9L0.9 9.1" stroke="#7a7577" stroke-width="2.5" fill="none"/></svg>
<span class="t" style="left:1171.4px;top:557.01px;font-size:13.5px;line-height:17px;color:#111;font-family:'DejaVu Sans',sans-serif;font-weight:bold;transform:scaleX(1.0325);">Een totaalrij in gegevensblad</span>
<span class="t" style="left:1171.4px;top:574.01px;font-size:13.5px;line-height:17px;color:#111;font-family:'DejaVu Sans',sans-serif;font-weight:bold;transform:scaleX(1.0421);">invoegen</span>
<span class="t" style="left:1292.4px;top:633.01px;font-size:12.5px;line-height:16px;color:#fff;font-family:'DejaVu Sans',sans-serif;font-weight:bold;transform:scaleX(0.9717);">Oefening</span>
<span class="t" style="left:1169.7px;top:665.01px;font-size:12px;line-height:15px;color:#111;font-family:'DejaVu Sans',sans-serif;transform:scaleX(1.1107);">Voeg een totaalrij in, bijvoorbeeld voor het</span>
<span class="t" style="left:1169.7px;top:681.01px;font-size:12px;line-height:15px;color:#111;font-family:'DejaVu Sans',sans-serif;">veld </span>
<span class="t" style="left:1201.4px;top:681.01px;font-size:12px;line-height:15px;color:#111;font-family:'DejaVu Sans',sans-serif;font-weight:bold;transform:scaleX(1.0694);">KlantNaam</span>
<span class="t" style="left:1279.9px;top:681.01px;font-size:12px;line-height:15px;color:#111;font-family:'DejaVu Sans',sans-serif;transform:scaleX(1.1007);">, om de weergegeven klanten</span>
<span class="t" style="left:1169.7px;top:697.01px;font-size:12px;line-height:15px;color:#111;font-family:'DejaVu Sans',sans-serif;transform:scaleX(1.1200);">op te tellen.</span>
<div class="a " style="left:1174px;top:734.3px;width:121px;height:22.5px;background:#5a1f3d;"></div>
<div class="a " style="left:1315px;top:734.3px;width:152px;height:22.5px;background:#5a1f3d;"></div>
<span class="t" style="left:1208.2px;top:739.01px;font-size:10.5px;line-height:13px;color:#fff;font-weight:bold;transform:scaleX(1.0159);">Opnieuw</span>
<span class="t" style="left:1334.6px;top:739.01px;font-size:10.5px;line-height:13px;color:#fff;font-weight:bold;">Antwoord bevestigen</span>
<span class="t" style="left:1217.8px;top:790.00px;font-size:10.5px;line-height:13px;color:#8e8e8e;font-family:'DejaVu Sans',sans-serif;transform:scaleX(0.9803);letter-spacing:0.8px;">Ref. nr.:146114</span>
<svg class="a" style="left:1266px;top:739px;" width="14" height="16" viewBox="0 0 14 16"><g fill="none" stroke="#fff" stroke-width="2.1"><path d="M2.5 9.2A4.6 4.6 0 0 1 8.6 3.6"/><path d="M11.5 6.8A4.6 4.6 0 0 1 5.4 12.4"/></g>
<path d="M7.2 0.6L11.8 3.2L7.6 6.4Z" fill="#fff"/><path d="M6.8 15.4L2.2 12.8L6.4 9.6Z" fill="#fff"/></svg>
<svg class="a" style="left:1447px;top:739px;" width="15" height="14" viewBox="0 0 15 14"><path d="M1 8.2L3.6 6.4L5.8 9.4Q9 3.6 14.6 0.4Q10 6 7 13.6L4.8 13.6Q3.4 10.6 1 8.2Z" fill="#fff"/></svg>
<svg class="a" style="left:1170px;top:781px;" width="38" height="30" viewBox="0 0 38 30"><ellipse cx="18.6" cy="14.5" rx="18.4" ry="10.8" fill="#7d7278" transform="rotate(-27 18.6 14.5)"/>
<text x="3.8" y="24.2" font-family="'Liberation Serif',serif" font-style="italic" font-size="35" fill="#fff" stroke="#fff" stroke-width=".5" textLength="21" lengthAdjust="spacingAndGlyphs">m</text>
<path d="M22 23.2Q29.6 19.6 29.8 12Q29.4 5.2 21.4 4.6Q14.4 4.6 9.4 9" fill="none" stroke="#fff" stroke-width=".9" stroke-linecap="round"/></svg>
<svg class="a" style="left:1486px;top:801px;" width="13" height="13" viewBox="0 0 13 13"><path d="M12.5 1L1 12.5M12.5 4.5L4.5 12.5M12.5 8L8 12.5" stroke="#555" stroke-width="1" fill="none"/></svg>
<svg class="a" style="left:7px;top:7px;" width="16" height="16" viewBox="0 0 16 16"><rect x="0" y="0" width="16" height="16" rx="3.2" fill="#111"/>
<path d="M3 3.6L7.3 3V7.4H3ZM8.3 2.9L13 2.2V7.4H8.3ZM3 8.4H7.3V12.9L3 12.3ZM8.3 8.4H13V13.7L8.3 13Z" fill="#fff"/></svg>
<svg class="a" style="left:9px;top:34px;" width="16" height="16" viewBox="0 0 16 16"><path d="M0 2.2L10 0V16L0 13.8Z" fill="#a4373a"/>
<path d="M10 3.2H13.2C15 3.2 16 3.8 16 4.4V11.6C16 12.2 15 12.8 13.2 12.8H10Z" fill="#fff" stroke="#a4373a" stroke-width="1"/>
<path d="M10 5.4Q13 6.3 16 5.2M10 7.9Q13 8.8 16 7.7M10 10.4Q13 11.3 16 10.2" stroke="#a4373a" stroke-width="1" fill="none"/>
<text x="1.7" y="11.7" font-family="'Liberation Sans',sans-serif" font-weight="bold" font-size="10" fill="#fff">A</text></svg>
<svg class="a" style="left:39px;top:35px;" width="14" height="14" viewBox="0 0 14 14"><path d="M0 0H14V14H0Z" fill="#7e4fa8"/><rect x="2.6" y="1.4" width="8.8" height="5.2" fill="#fff"/><rect x="3.6" y="9.6" width="6.8" height="4.4" fill="#fff"/><rect x="4.8" y="10.6" width="2.2" height="3.4" fill="#7e4fa8"/></svg>
<svg class="a" style="left:68px;top:35px;" width="14" height="14" viewBox="0 0 14 14"><path d="M5.2 0.8L1 5L5.2 9.2" stroke="#aaa" stroke-width="1.9" fill="none"/><path d="M1.5 5H8.5Q13 5 13 9Q13 12.5 8.5 13" stroke="#aaa" stroke-width="1.9" fill="none"/></svg>
<svg class="a" style="left:108px;top:35px;" width="14" height="14" viewBox="0 0 14 14"><g transform="translate(14 0) scale(-1 1)"><path d="M5.2 0.8L1 5L5.2 9.2" stroke="#aaa" stroke-width="1.9" fill="none"/><path d="M1.5 5H8.5Q13 5 13 9Q13 12.5 8.5 13" stroke="#aaa" stroke-width="1.9" fill="none"/></g></svg>
<svg class="a" style="left:88.3px;top:39.7px;" width="6" height="4" viewBox="0 0 6 4"><path d="M0 0H5.4L2.7 3.1Z" fill="#c2c2c2"/></svg>
<svg class="a" style="left:128.3px;top:39.7px;" width="6" height="4" viewBox="0 0 6 4"><path d="M0 0H5.4L2.7 3.1Z" fill="#c2c2c2"/></svg>
<svg class="a" style="left:146px;top:39px;" width="7" height="8" viewBox="0 0 7 8"><rect x="0" y="0.8" width="7" height="1" fill="#555"/><path d="M0 3.4H7L3.5 7Z" fill="#555"/></svg>
<span class="t" style="left:1784.4px;top:35.00px;font-size:13px;line-height:16px;color:#b5b5b5;font-weight:bold;transform:scaleX(1.0436);">?</span>
<div class="a " style="left:1813px;top:43px;width:9px;height:2px;background:#b9b9b9;"></div>
<svg class="a" style="left:1842px;top:37px;" width="10" height="10" viewBox="0 0 10 10"><path d="M2.5 2.5V0.8H9.2V6.5H7.5" stroke="#b9b9b9" stroke-width="1.4" fill="none"/><rect x="0.8" y="3.3" width="6.7" height="5.9" stroke="#b9b9b9" stroke-width="1.4" fill="none"/></svg>
<svg class="a" style="left:1871px;top:37px;" width="10" height="10" viewBox="0 0 10 10"><path d="M1 1L9 9M9 1L1 9" stroke="#b9b9b9" stroke-width="1.9" fill="none"/></svg>
<svg class="a" style="left:1845.3px;top:65.7px;" width="6" height="4" viewBox="0 0 6 4"><path d="M0 0H5.4L2.7 3.1Z" fill="#666"/></svg>
<svg class="a" style="left:1857px;top:56px;" width="24" height="24" viewBox="0 0 24 24"><rect width="24" height="24" fill="#ababab"/><circle cx="12" cy="9" r="5" fill="#fff"/><path d="M3 24V20Q3 14.5 9 14L12 15.5L15 14Q21 14.5 21 20V24Z" fill="#fff"/></svg>
<svg class="a" style="left:1872px;top:162px;" width="9" height="6" viewBox="0 0 9 6"><path d="M0.8 5.2L4.5 1.4L8.2 5.2" stroke="#6a6a6a" stroke-width="1.7" fill="none"/></svg>
<div class="a " style="left:708px;top:30.5px;width:118px;height:16px;background:#111;border-radius:0 0 4px 4px;border-bottom:1px solid #444;"></div>
<div class="a " style="left:719px;top:33px;width:3px;height:3px;background:#fff;"></div>
<div class="a " style="left:719px;top:39px;width:3px;height:3px;background:#fff;"></div>
<div class="a " style="left:725px;top:33px;width:3px;height:3px;background:#fff;"></div>
<div class="a " style="left:725px;top:39px;width:3px;height:3px;background:#fff;"></div>
<div class="a " style="left:731px;top:33px;width:3px;height:3px;background:#fff;"></div>
<div class="a " style="left:731px;top:39px;width:3px;height:3px;background:#fff;"></div>
<div class="a " style="left:737px;top:33px;width:3px;height:3px;background:#fff;"></div>
<div class="a " style="left:737px;top:39px;width:3px;height:3px;background:#fff;"></div>
<div class="a " style="left:743px;top:33px;width:3px;height:3px;background:#fff;"></div>
<div class="a " style="left:743px;top:39px;width:3px;height:3px;background:#fff;"></div>
<div class="a " style="left:749px;top:33px;width:3px;height:3px;background:#fff;"></div>
<div class="a " style="left:749px;top:39px;width:3px;height:3px;background:#fff;"></div>
<div class="a " style="left:782px;top:33px;width:3px;height:3px;background:#fff;"></div>
<div class="a " style="left:782px;top:39px;width:3px;height:3px;background:#fff;"></div>
<div class="a " style="left:788px;top:33px;width:3px;height:3px;background:#fff;"></div>
<div class="a " style="left:788px;top:39px;width:3px;height:3px;background:#fff;"></div>
<div class="a " style="left:794px;top:33px;width:3px;height:3px;background:#fff;"></div>
<div class="a " style="left:794px;top:39px;width:3px;height:3px;background:#fff;"></div>
<div class="a " style="left:800px;top:33px;width:3px;height:3px;background:#fff;"></div>
<div class="a " style="left:800px;top:39px;width:3px;height:3px;background:#fff;"></div>
<div class="a " style="left:806px;top:33px;width:3px;height:3px;background:#fff;"></div>
<div class="a " style="left:806px;top:39px;width:3px;height:3px;background:#fff;"></div>
<div class="a " style="left:812px;top:33px;width:3px;height:3px;background:#fff;"></div>
<div class="a " style="left:812px;top:39px;width:3px;height:3px;background:#fff;"></div>
<svg class="a" style="left:762px;top:33px;" width="10" height="9" viewBox="0 0 10 9"><path d="M3.2 0H6.8V3.6H10L5 8.6L0 3.6H3.2Z" fill="#e8e8e8"/></svg>
<svg class="a" style="left:10px;top:88px;" width="30" height="30" viewBox="0 0 30 30"><path d="M0.3 0.2V22H21ZM4.2 9.8V18.2H12.4Z" fill="#777" fill-rule="evenodd"/>
<path d="M26.2 0.6L29.6 4L12.2 21.4L8 22.6L9 18Z" fill="#3a78c0"/><path d="M24.4 2.4L27.8 5.8" stroke="#fff" stroke-width="1"/><path d="M8 22.6L9 18L12.2 21.4Z" fill="#fff"/><path d="M8 22.6L8.6 20.2L10.2 21.9Z" fill="#3a78c0"/>
<rect x="3.5" y="23.5" width="25" height="6" fill="#fff" stroke="#ed8733" stroke-width="1"/><path d="M7 24V26.5M10.5 24V26.5M14 24V26.5M17.5 24V26.5M21 24V26.5M24.5 24V26.5" stroke="#ed8733" stroke-width="1"/></svg>
<svg class="a" style="left:20.8px;top:143.2px;" width="6" height="4" viewBox="0 0 6 4"><path d="M0 0H5.4L2.7 3.1Z" fill="#6a6a6a"/></svg>
<svg class="a" style="left:63px;top:89px;" width="29" height="31" viewBox="0 0 29 31"><rect x="0" y="3" width="24" height="25" rx="1.5" fill="#eec87d"/>
<path d="M5 7.4V4.6Q5 3.4 6.2 3.4H9.2V2Q9.2 0.2 12 0.2Q14.8 0.2 14.8 2V3.4H17.8Q19 3.4 19 4.6V7.4Z" fill="#777"/><rect x="10.9" y="1.5" width="2.2" height="1.9" fill="#fff"/>
<path d="M14.5 11.5H23.5L28.5 16.5V30.5H14.5Z" fill="#fff" stroke="#777" stroke-width="1"/><path d="M23.5 11.5V16.5H28.5" fill="none" stroke="#777" stroke-width="1"/></svg>
<svg class="a" style="left:71.8px;top:143.2px;" width="6" height="4" viewBox="0 0 6 4"><path d="M0 0H5.4L2.7 3.1Z" fill="#6a6a6a"/></svg>
<svg class="a" style="left:99px;top:87px;" width="16" height="16" viewBox="0 0 16 16"><path d="M3.5 1L9.5 10.5M12.5 1L6.5 10.5" stroke="#666" stroke-width="1.5" fill="none"/><circle cx="4" cy="12.3" r="2.4" fill="none" stroke="#3a78c0" stroke-width="1.2"/><circle cx="12" cy="12.3" r="2.4" fill="none" stroke="#3a78c0" stroke-width="1.2"/></svg>
<svg class="a" style="left:99px;top:110px;" width="16" height="16" viewBox="0 0 16 16"><path d="M0.5 1.5H6L8.5 4V11.5H0.5Z" fill="#fff" stroke="#777"/><path d="M2 4.5H4.6M2 7H4.6M2 9.5H4.6" stroke="#3a78c0" stroke-width=".8"/>
<path d="M6.5 4.5H12L14.5 7V14.5H6.5Z" fill="#fff" stroke="#777"/><path d="M8.4 8H12.6M8.4 10.3H12.6M8.4 12.6H12.6" stroke="#3a78c0" stroke-width=".8"/></svg>
<svg class="a" style="left:99px;top:133px;" width="17" height="15" viewBox="0 0 17 15"><path d="M13 0.8L16 3.6L11.5 8L8.6 5Z" fill="#aaa"/><path d="M8 5.6L11 8.6L9.6 10L6.6 7Z" fill="#c9c5cc"/><path d="M6 7.6L9 10.6L5 14.5Q2.5 12 0.5 11.5Q4 10 6 7.6Z" fill="#d6d2d8"/></svg>
<svg class="a" style="left:219px;top:89px;" width="27" height="27" viewBox="0 0 27 27"><path d="M0 0H27L16 13V26H11V13Z" fill="#777"/><path d="M2.5 1.5L12 12.6V25" stroke="#fff" stroke-width=".9" fill="none" opacity=".75"/></svg>
<svg class="a" style="left:258.6px;top:86.6px;" width="15" height="16" viewBox="0 0 15 16"><text x="0" y="7.2" font-family="'Liberation Sans',sans-serif" font-size="9" fill="#3a78c0" stroke="#3a78c0" stroke-width=".35">A</text><text x="0" y="15.4" font-family="'Liberation Sans',sans-serif" font-size="9" fill="#8e44ad" stroke="#8e44ad" stroke-width=".35">Z</text><path d="M11.5 0.5V14M8.8 11L11.5 14.2L14.2 11" stroke="#555" stroke-width="1.1" fill="none"/></svg>
<svg class="a" style="left:258.6px;top:109.6px;" width="15" height="16" viewBox="0 0 15 16"><text x="0" y="7.2" font-family="'Liberation Sans',sans-serif" font-size="9" fill="#8e44ad" stroke="#8e44ad" stroke-width=".35">Z</text><text x="0" y="15.4" font-family="'Liberation Sans',sans-serif" font-size="9" fill="#3a78c0" stroke="#3a78c0" stroke-width=".35">A</text><path d="M11.5 0.5V14M8.8 11L11.5 14.2L14.2 11" stroke="#555" stroke-width="1.1" fill="none"/></svg>
<svg class="a" style="left:257.5px;top:133px;" width="15" height="16" viewBox="0 0 15 16"><text x="0" y="7.2" font-family="'Liberation Sans',sans-serif" font-size="9" fill="#3a78c0" stroke="#3a78c0" stroke-width=".35">A</text><text x="0" y="15.4" font-family="'Liberation Sans',sans-serif" font-size="9" fill="#8e44ad" stroke="#8e44ad" stroke-width=".35">Z</text></svg>
<svg class="a" style="left:263px;top:139px;" width="10" height="9" viewBox="0 0 10 9"><path d="M5.5 0.5L9.5 3.5L5 8.5L1 5.5Z" fill="#e8738a"/><path d="M1 5.5L5 8.5L3.6 9L0.4 6.6Z" fill="#f3b3bf"/></svg>
<svg class="a" style="left:353.7px;top:87.8px;" width="11.4" height="10.8" viewBox="0 0 11.4 10.8"><path d="M0 0H11.4L6.8 5.4V10.8H4.6V5.4Z" fill="#666"/></svg>
<svg class="a" style="left:361px;top:91px;" width="8" height="12" viewBox="0 0 8 12"><path d="M4.5 0L8 0.6L5 5H7.6L1 12L3 6.4H0.6Z" fill="#f2b95e"/></svg>
<svg class="a" style="left:423.3px;top:93.7px;" width="6" height="4" viewBox="0 0 6 4"><path d="M0 0H5.4L2.7 3.1Z" fill="#606060"/></svg>
<svg class="a" style="left:352.5px;top:109.5px;" width="8" height="8" viewBox="0 0 8 8"><path d="M0 0H8L4.8 4.0V8H3.2V4.0Z" fill="#666"/></svg>
<svg class="a" style="left:356px;top:112px;" width="13" height="14" viewBox="0 0 13 14"><rect x="0.5" y="1.5" width="12" height="12" fill="#fff" stroke="#666"/><rect x="1" y="2" width="11" height="2.6" fill="#3a78c0"/><rect x="3" y="9.5" width="1.6" height="1.6" fill="#555"/><rect x="6" y="9.5" width="1.6" height="1.6" fill="#555"/><rect x="9" y="9.5" width="1.6" height="1.6" fill="#555"/></svg>
<svg class="a" style="left:428.3px;top:117.2px;" width="6" height="4" viewBox="0 0 6 4"><path d="M0 0H5.4L2.7 3.1Z" fill="#606060"/></svg>
<svg class="a" style="left:353px;top:134.5px;" width="15" height="14" viewBox="0 0 15 14"><path d="M0 0H15L9.0 7.0V14H6.0V7.0Z" fill="#666"/></svg>
<svg class="a" style="left:463px;top:87px;" width="26" height="32" viewBox="0 0 26 32"><path d="M1.5 28.5V1.5H15.5" fill="none" stroke="#8a8a8a" stroke-width="1"/>
<path d="M4.5 3.5H18.5L24.5 9.5V30.5H4.5Z" fill="#fff" stroke="#8a8a8a" stroke-width="1"/><path d="M18.5 3.5V9.5H24.5" fill="none" stroke="#8a8a8a"/>
<g fill="none" stroke="#5fa38c" stroke-width="2.7"><path d="M9.2 18.6A5.7 5.7 0 0 1 18.8 14.8"/><path d="M20.2 20.6A5.7 5.7 0 0 1 10.6 24.4"/></g>
<path d="M21.8 11V17.4H15.4Z" fill="#5fa38c"/><path d="M7.6 28.2V21.8H14Z" fill="#5fa38c"/></svg>
<svg class="a" style="left:482.3px;top:143.7px;" width="6" height="4" viewBox="0 0 6 4"><path d="M0 0H5.4L2.7 3.1Z" fill="#555"/></svg>
<svg class="a" style="left:500px;top:87px;" width="16" height="14" viewBox="0 0 16 14"><path d="M3.5 0V7M0 3.5H7M1 1L6 6M6 1L1 6" stroke="#f0b458" stroke-width=".8"/><circle cx="3.5" cy="3.5" r="1.2" fill="#fff" stroke="#f0b458" stroke-width=".6"/><rect x="2.5" y="6.5" width="12" height="6" fill="#fff" stroke="#777"/><rect x="4.6" y="8.4" width="8" height="2.4" fill="#3a78c0"/></svg>
<svg class="a" style="left:501px;top:109px;" width="17" height="17" viewBox="0 0 17 17"><rect x="1.5" y="9.5" width="12" height="6" fill="#fff" stroke="#777"/><rect x="3.4" y="11.4" width="8" height="2.3" fill="#3a78c0"/>
<rect x="6" y="1" width="10" height="10" fill="#8e55b0"/><rect x="9.4" y="2" width="4" height="2.4" fill="#fff"/><rect x="9.4" y="7.4" width="4" height="2.2" fill="#fff"/></svg>
<svg class="a" style="left:502px;top:135px;" width="15" height="14" viewBox="0 0 15 14"><path d="M1 1L14 13M13.5 0.8L1.2 13.2" stroke="#666" stroke-width="1.8" fill="none"/></svg>
<svg class="a" style="left:563.3px;top:139.2px;" width="6" height="4" viewBox="0 0 6 4"><path d="M0 0H5.4L2.7 3.1Z" fill="#555"/></svg>
<svg class="a" style="left:576px;top:87px;" width="15" height="16" viewBox="0 0 15 16"><text x="0.4" y="15" font-family="'Liberation Sans',sans-serif" font-weight="bold" font-size="20.5" fill="#555" textLength="14.5" lengthAdjust="spacingAndGlyphs">Σ</text></svg>
<svg class="a" style="left:577px;top:110px;" width="15" height="17" viewBox="0 0 15 17"><text x="0" y="5.8" font-family="'Liberation Sans',sans-serif" font-weight="bold" font-size="6.6" fill="#555" textLength="13.5" lengthAdjust="spacingAndGlyphs">ABC</text><path d="M1.5 10.5L5.5 14.5L13.5 7" stroke="#3a78c0" stroke-width="2.2" fill="none"/></svg>
<svg class="a" style="left:576px;top:133px;" width="16" height="15" viewBox="0 0 16 15"><rect x="0.5" y="0.5" width="15" height="14" fill="#fff" stroke="#777"/><rect x="0" y="0" width="16" height="3" fill="#3a78c0"/><rect x="1" y="7" width="14" height="3.4" fill="#c5d9f1"/><path d="M1 6.5H15M1 10.5H15M5.5 3V14M10.5 3V14" stroke="#999" stroke-width=".8"/></svg>
<svg class="a" style="left:626.3px;top:139.2px;" width="6" height="4" viewBox="0 0 6 4"><path d="M0 0H5.4L2.7 3.1Z" fill="#606060"/></svg>
<svg class="a" style="left:661px;top:91px;" width="26" height="23" viewBox="0 0 26 23"><path d="M5 3H9V0.5H5ZM17 3H21V0.5H17Z" fill="#666"/><path d="M3.5 3H10.5L11.5 8H14.5L15.5 3H22.5L26 13V23H15.5V12H10.5V23H0V13Z" fill="#666"/>
<path d="M3 9L2 13V21.5M23 9L24 13V21.5" stroke="#fff" stroke-width=".8" fill="none" opacity=".6"/></svg>
<svg class="a" style="left:698px;top:88px;" width="17" height="15" viewBox="0 0 17 15"><text x="0" y="6.6" font-family="'Liberation Sans',sans-serif" font-size="9.5" fill="#555" stroke="#555" stroke-width=".3">a</text><text x="5.4" y="6.6" font-family="'Liberation Sans',sans-serif" font-size="9.5" fill="#b5b5b5">b</text>
<text x="4.8" y="14.2" font-family="'Liberation Sans',sans-serif" font-size="10.5" fill="#555" stroke="#555" stroke-width=".3">a</text><text x="10.4" y="14.2" font-family="'Liberation Sans',sans-serif" font-size="10.5" fill="#3a78c0" stroke="#3a78c0" stroke-width=".3">c</text>
<path d="M0.8 8.6V11.2H3.8M2.6 9.8L4 11.2L2.6 12.6" stroke="#3a78c0" stroke-width="1" fill="none"/></svg>
<svg class="a" style="left:700px;top:113px;" width="12" height="10" viewBox="0 0 12 10"><path d="M0 5H10M6 0.8L10.4 5L6 9.2" stroke="#3a78c0" stroke-width="1.8" fill="none"/></svg>
<svg class="a" style="left:752.3px;top:117.2px;" width="6" height="4" viewBox="0 0 6 4"><path d="M0 0H5.4L2.7 3.1Z" fill="#606060"/></svg>
<svg class="a" style="left:702px;top:134px;" width="10" height="15" viewBox="0 0 10 15"><path d="M0.7 0.8V11.6L3.4 9.2L5.4 13.8L7 13.1L5 8.6H8.6Z" fill="#fff" stroke="#555" stroke-width="1"/></svg>
<svg class="a" style="left:751.3px;top:140.2px;" width="6" height="4" viewBox="0 0 6 4"><path d="M0 0H5.4L2.7 3.1Z" fill="#606060"/></svg>
<svg class="a" style="left:902.3px;top:101.7px;" width="6" height="4" viewBox="0 0 6 4"><path d="M0 0H5.4L2.7 3.1Z" fill="#555"/></svg>
<svg class="a" style="left:957.3px;top:101.7px;" width="6" height="4" viewBox="0 0 6 4"><path d="M0 0H5.4L2.7 3.1Z" fill="#555"/></svg>
<svg class="a" style="left:972px;top:95px;" width="14" height="16" viewBox="0 0 14 16"><circle cx="1.6" cy="2" r="1.4" fill="#bdbdbd"/><circle cx="1.6" cy="8" r="1.4" fill="#bdbdbd"/><circle cx="1.6" cy="14" r="1.4" fill="#bdbdbd"/><path d="M5 2H13M5 8H13M5 14H13" stroke="#bdbdbd" stroke-width="1"/></svg>
<svg class="a" style="left:994px;top:95px;" width="15" height="16" viewBox="0 0 15 16"><text x="0" y="4.5" font-size="5.5" font-family="'Liberation Sans',sans-serif" fill="#bdbdbd">1</text><text x="0" y="10.5" font-size="5.5" font-family="'Liberation Sans',sans-serif" fill="#bdbdbd">2</text><text x="0" y="16.3" font-size="5.5" font-family="'Liberation Sans',sans-serif" fill="#bdbdbd">3</text><path d="M6 2H14M6 8H14M6 14H14" stroke="#bdbdbd" stroke-width="1"/></svg>
<svg class="a" style="left:1024px;top:97px;" width="16" height="12" viewBox="0 0 16 12"><path d="M7 0.5H16M9 3.5H16M9 7H16M7 10.5H16" stroke="#c4c4c4" stroke-width="1"/><path d="M0 5.3H6M3.6 2.6L6.4 5.3L3.6 8" stroke="#bdbdbd" stroke-width="1.5" fill="none"/></svg>
<svg class="a" style="left:1046px;top:97px;" width="16" height="12" viewBox="0 0 16 12"><path d="M7 0.5H16M9 3.5H16M9 7H16M7 10.5H16" stroke="#c4c4c4" stroke-width="1"/><path d="M0.6 5.3H6.6M3.4 2.6L0.6 5.3L3.4 8" stroke="#bdbdbd" stroke-width="1.5" fill="none"/></svg>
<svg class="a" style="left:1079px;top:99px;" width="13" height="9" viewBox="0 0 13 9"><path d="M0 0L4 3.5L0 7Z" fill="#bdbdbd"/><path d="M8.4 8V0.6M10.8 8V0.6M12 0.6H7.6Q5 0.6 5 2.6Q5 4.6 8.4 4.6" stroke="#bdbdbd" stroke-width="1.2" fill="none"/><path d="M7.6 0.6Q5 0.6 5 2.6Q5 4.6 8.4 4.6Z" fill="#bdbdbd"/></svg>
<svg class="a" style="left:1099.3px;top:101.7px;" width="6" height="4" viewBox="0 0 6 4"><path d="M0 0H5.4L2.7 3.1Z" fill="#c8c8c8"/></svg>
<span class="t" style="left:779.9px;top:126.01px;font-size:12.5px;line-height:16px;color:#444;font-weight:bold;transform:scaleX(1.0242);">B</span>
<span class="t" style="left:803.9px;top:126.01px;font-size:12.5px;line-height:16px;color:#444;font-family:'Liberation Serif',serif;font-weight:bold;font-style:italic;transform:scaleX(1.2821);">I</span>
<span class="t" style="left:823.9px;top:126.01px;font-size:12.5px;line-height:16px;color:#444;font-weight:bold;transform:scaleX(1.0796);text-decoration:underline;">U</span>
<span class="t" style="left:854.7px;top:125.01px;font-size:13.5px;line-height:17px;color:#444;transform:scaleX(1.2256);">A</span>
<div class="a " style="left:852px;top:138px;width:16px;height:3.5px;background:#f00000;"></div>
<svg class="a" style="left:874.3px;top:132.2px;" width="6" height="4" viewBox="0 0 6 4"><path d="M0 0H5.4L2.7 3.1Z" fill="#606060"/></svg>
<svg class="a" style="left:886px;top:126px;" width="16" height="16" viewBox="0 0 16 16"><text x="0" y="8" font-size="8.5" font-family="'Liberation Sans',sans-serif" fill="#c2c2c2">ab</text><path d="M4 11L13.5 1.5L15.5 3.5L6 13Z" fill="#c4c4c4"/><rect x="0" y="12.5" width="16" height="3.5" fill="#e4dfe6"/></svg>
<svg class="a" style="left:908.3px;top:132.2px;" width="6" height="4" viewBox="0 0 6 4"><path d="M0 0H5.4L2.7 3.1Z" fill="#c8c8c8"/></svg>
<svg class="a" style="left:920px;top:126px;" width="17" height="16" viewBox="0 0 17 16"><path d="M7.6 1.5L13.4 7.3L7.6 13L1.8 7.3Z" fill="#fff" stroke="#555" stroke-width="1"/><path d="M6.6 5.5V1Q6.6 0.3 7.6 0.3Q8.6 0.3 8.6 1V4" stroke="#555" stroke-width=".9" fill="none"/><path d="M13.2 5.6Q16.6 8 14.4 11.6Q14.2 8.4 12 7.2Z" fill="#3a78c0"/><rect x="0" y="12.5" width="16" height="3.5" fill="#666"/></svg>
<svg class="a" style="left:942.3px;top:132.2px;" width="6" height="4" viewBox="0 0 6 4"><path d="M0 0H5.4L2.7 3.1Z" fill="#606060"/></svg>
<svg class="a" style="left:964px;top:129px;" width="14" height="11" viewBox="0 0 14 11"><path d="M0 0.5H14M0 3.5H10M0 6.5H14M0 9.5H10" stroke="#555" stroke-width="1"/></svg>
<svg class="a" style="left:986px;top:129px;" width="14" height="11" viewBox="0 0 14 11"><path d="M0 0.5H14M2 3.5H12M0 6.5H14M2 9.5H12" stroke="#555" stroke-width="1"/></svg>
<svg class="a" style="left:1008px;top:129px;" width="14" height="11" viewBox="0 0 14 11"><path d="M0 0.5H14M4 3.5H14M0 6.5H14M4 9.5H14" stroke="#555" stroke-width="1"/></svg>
<svg class="a" style="left:1038px;top:126px;" width="16" height="16" viewBox="0 0 16 16"><path d="M0.5 15.5V0.5H15.5" stroke="#555" stroke-width="1" stroke-dasharray="1 1" fill="none"/><path d="M0.5 15.5L15.5 0.5V15.5Z" fill="none" stroke="#555"/><path d="M7 9.5H15.5M4 12.5H15.5M8.5 8V15.5M12 4.5V15.5" stroke="#555" stroke-width="1" fill="none"/></svg>
<svg class="a" style="left:1058.3px;top:132.2px;" width="6" height="4" viewBox="0 0 6 4"><path d="M0 0H5.4L2.7 3.1Z" fill="#606060"/></svg>
<svg class="a" style="left:1080px;top:126px;" width="16" height="16" viewBox="0 0 16 16"><rect x="0.5" y="0.5" width="15" height="9" fill="#fff" stroke="#666"/><rect x="1" y="3.6" width="14" height="2.8" fill="#b9d3ee"/><path d="M5.5 0.5V9.5M10.5 0.5V9.5M0.5 3.5H15.5M0.5 6.5H15.5" stroke="#888" stroke-width=".7"/><rect x="0" y="12.5" width="16" height="3.5" fill="#e6e6e6"/></svg>
<svg class="a" style="left:1102.3px;top:132.2px;" width="6" height="4" viewBox="0 0 6 4"><path d="M0 0H5.4L2.7 3.1Z" fill="#606060"/></svg>
<svg class="a" style="left:196px;top:162px;" width="8" height="8" viewBox="0 0 8 8"><path d="M0.5 5V0.5H5" stroke="#777" fill="none"/><path d="M3 3L7 7M7 3.6V7H3.6" stroke="#777" stroke-width="1" fill="none"/></svg>
<svg class="a" style="left:1104px;top:162px;" width="8" height="8" viewBox="0 0 8 8"><path d="M0.5 5V0.5H5" stroke="#777" fill="none"/><path d="M3 3L7 7M7 3.6V7H3.6" stroke="#777" stroke-width="1" fill="none"/></svg>
<svg class="a" style="left:280px;top:184px;" width="13" height="13" viewBox="0 0 13 13"><defs><linearGradient id="cb" x1="0" y1="0" x2="0" y2="1"><stop offset="0" stop-color="#f6f6f7"/><stop offset="1" stop-color="#d9dadd"/></linearGradient></defs><circle cx="6.5" cy="6.5" r="5.8" fill="url(#cb)" stroke="#b0b3b9" stroke-width="1.3"/><path d="M3 5H10L6.5 9Z" fill="#4a4658"/></svg>
<svg class="a" style="left:301px;top:188px;" width="9" height="7" viewBox="0 0 9 7"><path d="M3.6 0.3L0.6 3.5L3.6 6.7M8 0.3L5 3.5L8 6.7" stroke="#333" stroke-width="1" fill="none"/></svg>
<svg class="a" style="left:297px;top:211px;" width="14" height="14" viewBox="0 0 14 14"><circle cx="8.6" cy="5.4" r="3.7" fill="#fff" stroke="#3b78b5" stroke-width="1.4"/><path d="M5.8 8.2L1.2 12.4" stroke="#3b78b5" stroke-width="2.3"/></svg>
<svg class="a" style="left:321px;top:198px;" width="19" height="20" viewBox="0 0 19 20"><defs><linearGradient id="sc" x1="0" y1="0" x2="0" y2="1"><stop offset="0" stop-color="#f4f5f7"/><stop offset="1" stop-color="#dcdfe4"/></linearGradient></defs><path d="M4 16L15 5V16Z" fill="url(#sc)"/><path d="M4 16L15 5" stroke="#b7cdf0" stroke-width=".8"/></svg>
<svg class="a" style="left:469.5px;top:202px;" width="14" height="9" viewBox="0 0 14 9"><path d="M0 4.8H5.4L2.7 8Z" fill="#222"/><path d="M3.2 0H13.4L9.6 4.6V8.6L7.4 8.6V4.6Z" fill="#444"/><path d="M5.4 1L8 4.2" stroke="#fff" stroke-width=".9"/></svg>
<svg class="a" style="left:948px;top:202px;" width="14" height="9" viewBox="0 0 14 9"><path d="M0 4.8H5.4L2.7 8Z" fill="#222"/><path d="M3.2 0H13.4L9.6 4.6V8.6L7.4 8.6V4.6Z" fill="#444"/><path d="M5.4 1L8 4.2" stroke="#fff" stroke-width=".9"/></svg>
<svg class="a" style="left:659.5px;top:203px;" width="9" height="8" viewBox="0 0 9 8"><path d="M0 3.4H4.6L2.3 6.2Z" fill="#222"/><path d="M6.6 0V7M4.8 5L6.6 7.2L8.4 5" stroke="#222" stroke-width="1" fill="none"/></svg>
<svg class="a" style="left:371.5px;top:940px;" width="7" height="7" viewBox="0 0 7 7"><rect x="0" y="0" width="1.3" height="7" fill="#4a4e5c"/><path d="M6.8 0V7L2 3.5Z" fill="#4a4e5c"/></svg>
<svg class="a" style="left:390px;top:940px;" width="5" height="7" viewBox="0 0 5 7"><path d="M4.6 0V7L0 3.5Z" fill="#c3c5cb"/></svg>
<svg class="a" style="left:459px;top:940px;" width="5" height="7" viewBox="0 0 5 7"><path d="M0 0V7L4.6 3.5Z" fill="#4a4e5c"/></svg>
<svg class="a" style="left:474.8px;top:940px;" width="7" height="7" viewBox="0 0 7 7"><rect x="5.6" y="0" width="1.3" height="7" fill="#4a4e5c"/><path d="M0 0V7L4.8 3.5Z" fill="#4a4e5c"/></svg>
<svg class="a" style="left:489px;top:940px;" width="13" height="7" viewBox="0 0 13 7"><path d="M0 0V7L4.2 3.5Z" fill="#4a4e5c"/><path d="M8.8 0V7M5.4 3.5H12.2M6.4 1L11.2 6M11.2 1L6.4 6" stroke="#e8c63c" stroke-width="1.3"/></svg>
<svg class="a" style="left:514.5px;top:937px;" width="16" height="14" viewBox="0 0 16 14"><path d="M0 0H16L9.6 6.6V13.8H6.4V6.6Z" fill="#666"/></svg>
<svg class="a" style="left:1826px;top:957px;" width="14" height="13" viewBox="0 0 14 13"><rect x="0.6" y="0.6" width="12.8" height="11.8" fill="none" stroke="#fff" stroke-width="1.2"/><path d="M0.6 3.4H13.4M4.2 3.4V12.4" stroke="#fff" stroke-width="1.1"/><path d="M6 6H8M9.6 6H11.6M6 9.2H8M9.6 9.2H11.6" stroke="#fff" stroke-width="1.1"/></svg>
<svg class="a" style="left:1864px;top:956px;" width="15" height="15" viewBox="0 0 15 15"><path d="M0.5 1V8.5H6.2ZM1.7 4.2V7.3H4Z" fill="#fff" fill-rule="evenodd"/><path d="M12.2 1.2L13.8 2.8L6.8 9L4.8 9.6L5.4 7.6Z" fill="#fff"/><rect x="1.2" y="10.6" width="12.6" height="3.6" fill="none" stroke="#fff" stroke-width="1.1"/><path d="M4 10.6V12.4M6.6 10.6V12.4M9.2 10.6V12.4M11.6 10.6V12.4" stroke="#fff" stroke-width=".9"/></svg>
<svg class="a" style="left:8px;top:977px;" width="36" height="36" viewBox="0 0 36 36"><defs><radialGradient id="orb" cx="50%" cy="62%" r="62%"><stop offset="0" stop-color="#5cc4ec"/><stop offset=".45" stop-color="#2a7fc0"/><stop offset="1" stop-color="#123a70"/></radialGradient>
<linearGradient id="orbh" x1="0" y1="0" x2="0" y2="1"><stop offset="0" stop-color="#fff" stop-opacity=".75"/><stop offset="1" stop-color="#fff" stop-opacity=".05"/></linearGradient></defs>
<circle cx="18" cy="18" r="17.6" fill="url(#orb)" stroke="#2c4d78" stroke-width=".8"/>
<path d="M3 14Q6 2.5 18 1.6Q30 2.5 33 14Q18 20 3 14Z" fill="url(#orbh)"/>
<path d="M10.2 9.2Q13.4 7.4 16.8 9L15.6 16.4Q12.4 15 9 16.8Z" fill="#e8582c"/>
<path d="M18.4 9.6Q21.8 11.2 25.4 9.4L24.2 16.8Q20.8 18.6 17.2 17Z" fill="#8cc63f"/>
<path d="M8.6 18.6Q12 16.8 15.4 18.4L14.2 25.8Q10.8 24.2 7.4 26Z" fill="#3a94dc"/>
<path d="M16.9 19Q20.4 20.6 23.9 18.8L22.7 26.2Q19.2 28 15.7 26.4Z" fill="#f8c030"/></svg>
<svg class="a" style="left:72px;top:978px;" width="36" height="34" viewBox="0 0 36 34"><defs><linearGradient id="ieg" x1="0" y1="0" x2="0" y2="1"><stop offset="0" stop-color="#8fdcf4"/><stop offset=".55" stop-color="#3aa6e0"/><stop offset="1" stop-color="#2a8ad0"/></linearGradient></defs>
<text x="3.4" y="30.6" font-family="'Liberation Sans',sans-serif" font-weight="bold" font-size="50" fill="url(#ieg)" stroke="#2478b8" stroke-width=".5">e</text>
<path d="M6 31Q-1.6 22 9 10.4Q19 0.6 30 4.4" fill="none" stroke="#f4c81c" stroke-width="2.6"/><path d="M27 2.6Q31 3 32 6" fill="none" stroke="#f4c81c" stroke-width="1.6"/></svg>
<svg class="a" style="left:134px;top:982px;" width="33" height="30" viewBox="0 0 33 30"><path d="M1 4Q1 2.6 2.4 2.6H14.6L16.4 5H30Q31.6 5 31.6 6.6V25.4Q31.6 27 30 27H2.6Q1 27 1 25.4Z" fill="#f3dc96" stroke="#d9b85c" stroke-width="1"/>
<path d="M9.4 6.4V4.2H20L21.6 6.4ZM17.4 8.6V6.4H29L30.4 8.6Z" fill="#f9ecc0" stroke="#d9b85c" stroke-width=".6"/>
<rect x="4.6" y="0.6" width="3" height="1.8" fill="#1fb82c"/><rect x="12.4" y="3" width="3" height="1.8" fill="#e0382c"/><rect x="20.6" y="5.2" width="3" height="1.8" fill="#2c8ee8"/>
<path d="M1.4 9.4H31.4V25.4Q31.4 26.8 30 26.8H2.8Q1.4 26.8 1.4 25.4Z" fill="#f6e3a4"/>
<path d="M4.6 17.6Q4.6 16 6.2 16H26.4Q28 16 28 17.6V28.6H22.6V21.6H10V28.6H4.6Z" fill="#7cc0ea" stroke="#3f93cf" stroke-width="1"/><path d="M5.6 17.4H27" stroke="#d4ecfa" stroke-width="1.2"/></svg>
<svg class="a" style="left:197px;top:984px;" width="30" height="25" viewBox="0 0 30 25"><rect x="5" y="1.4" width="21.4" height="21.6" fill="#bfe0f6" stroke="#8bbfe6" stroke-width=".8"/><rect x="3" y="0.8" width="21.4" height="22.4" fill="#aed6f2" stroke="#86bae2" stroke-width=".8"/>
<rect x="1" y="0.4" width="21.4" height="23.4" fill="#9ccaec" stroke="#7eb2dc" stroke-width=".8"/>
<circle cx="11.5" cy="11.8" r="8.7" fill="#f58220"/><path d="M4 8.4Q11.5 0.8 19 8.4Q11.5 5.4 4 8.4Z" fill="#fbb060" opacity=".7"/><path d="M8 6.4L17.4 11.8L8 17.2Z" fill="#fff"/></svg>
<svg class="a" style="left:258.5px;top:979.5px;" width="32" height="32" viewBox="0 0 32 32"><path d="M0.5 5L18.5 0.4V30.6L0.5 26Z" fill="#a4373a"/>
<path d="M18.5 5.4H25.6Q30.4 5.4 30.4 7.8V22.2Q30.4 24.6 25.6 24.6H18.5Z" fill="#fff" stroke="#a4373a" stroke-width="1.1"/>
<path d="M18.5 9.4Q24.4 11 30.4 9M18.5 14.4Q24.4 16 30.4 14M18.5 19.4Q24.4 21 30.4 19" stroke="#a4373a" stroke-width="1.1" fill="none"/>
<text x="3.6" y="22" font-family="'Liberation Sans',sans-serif" font-weight="bold" font-size="18" fill="#fff">A</text></svg>
<svg class="a" style="left:1719px;top:994px;" width="9" height="5" viewBox="0 0 9 5"><path d="M0 4.6L4.5 0L9 4.6Z" fill="#fff"/></svg>
<svg class="a" style="left:1740px;top:987px;" width="18" height="18" viewBox="0 0 18 18"><rect x="5.2" y="4.2" width="11.6" height="9" fill="#6c7f98" stroke="#fff" stroke-width="1.2"/><rect x="9" y="14" width="4" height="1.6" fill="#fff"/><rect x="6.6" y="15.6" width="8.8" height="1.6" fill="#fff"/>
<path d="M1.2 1V4.4H4.6V1M2 0V1.4M3.8 0V1.4M2.9 4.4V12.6H5" stroke="#fff" stroke-width="1.1" fill="none"/></svg>
<svg class="a" style="left:1764px;top:988px;" width="18" height="16" viewBox="0 0 18 16"><path d="M0.6 5.4H3.8L8.2 1.2V14.8L3.8 10.6H0.6Z" fill="#fff" stroke="#dfe6ee" stroke-width=".6"/><path d="M10.4 5.2Q12 8 10.4 10.8M12.6 3.4Q15.2 8 12.6 12.6M14.8 1.8Q18.2 8 14.8 14.2" stroke="#fff" stroke-width="1.1" fill="none"/></svg>
<div class="a " style="left:1890.6px;top:31px;width:1.4px;height:984px;background:#000;"></div>
</div>
</body></html>
